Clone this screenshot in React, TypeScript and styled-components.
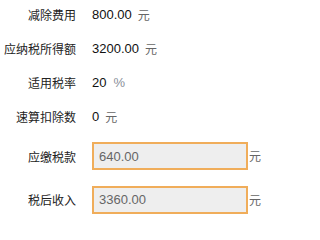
import { FC } from "react";
import styled, { createGlobalStyle } from "styled-components";

const GlobalStyle = createGlobalStyle`
  body {
    margin: 0;
    background: #fff;
    font-family: "Liberation Sans", "Noto Sans CJK SC", sans-serif;
  }
`;

const Form = styled.main`
  display: flex;
  flex-direction: column;
  gap: 14px;
  padding-top: 4.5px;
`;

const Row = styled.div<{ $input?: boolean }>`
  display: grid;
  grid-template-columns: 76px auto;
  column-gap: 16px;
  align-items: center;
  height: ${(p) => (p.$input ? "28px" : "20px")};
  margin-top: ${(p) => (p.$input ? "1.5px" : "0")};
`;

const Label = styled.label`
  text-align: right;
  font-family: "Noto Sans CJK SC", sans-serif;
  font-size: 12px;
  color: #222;
  white-space: nowrap;
`;

const Value = styled.div`
  display: flex;
  align-items: center;
  font-size: 13px;
  line-height: 20px;
  color: #111;
`;

const Unit = styled.span<{ $gap?: number; $light?: boolean }>`
  margin-left: ${(p) => p.$gap ?? 6}px;
  font-family: ${(p) =>
    p.$light ? '"Liberation Sans", sans-serif' : '"Noto Sans CJK SC", sans-serif'};
  font-size: ${(p) => (p.$light ? "13px" : "12px")};
  color: ${(p) => (p.$light ? "#8a8f99" : "#666")};
`;

const Field = styled.input`
  box-sizing: border-box;
  width: 156px;
  height: 28px;
  margin: 0;
  padding: 0 5px;
  border: 2px solid #f0ad5a;
  border-radius: 0;
  background: #eeeeee;
  font-family: "Liberation Sans", sans-serif;
  font-size: 13px;
  color: #666;
  outline: none;
`;

interface InfoItem {
  label: string;
  value: string;
  unit: string;
}

const infoItems: InfoItem[] = [
  { label: "减除费用", value: "800.00", unit: "元" },
  { label: "应纳税所得额", value: "3200.00", unit: "元" },
  { label: "适用税率", value: "20", unit: "%" },
  { label: "速算扣除数", value: "0", unit: "元" },
];

const resultItems = [
  { label: "应缴税款", value: "640.00" },
  { label: "税后收入", value: "3360.00" },
];

const App: FC = () => {
  return (
    <>
      <GlobalStyle />
      <Form>
        {infoItems.map((item) => (
          <Row key={item.label}>
            <Label>{item.label}</Label>
            <Value>
              {item.value}
              <Unit $light={item.unit === "%"} $gap={item.unit === "%" ? 7 : 6}>
                {item.unit}
              </Unit>
            </Value>
          </Row>
        ))}
        {resultItems.map((item) => (
          <Row $input key={item.label}>
            <Label>{item.label}</Label>
            <Value>
              <Field type="text" value={item.value} readOnly />
              <Unit $gap={1}>元</Unit>
            </Value>
          </Row>
        ))}
      </Form>
    </>
  );
};

export default App;
